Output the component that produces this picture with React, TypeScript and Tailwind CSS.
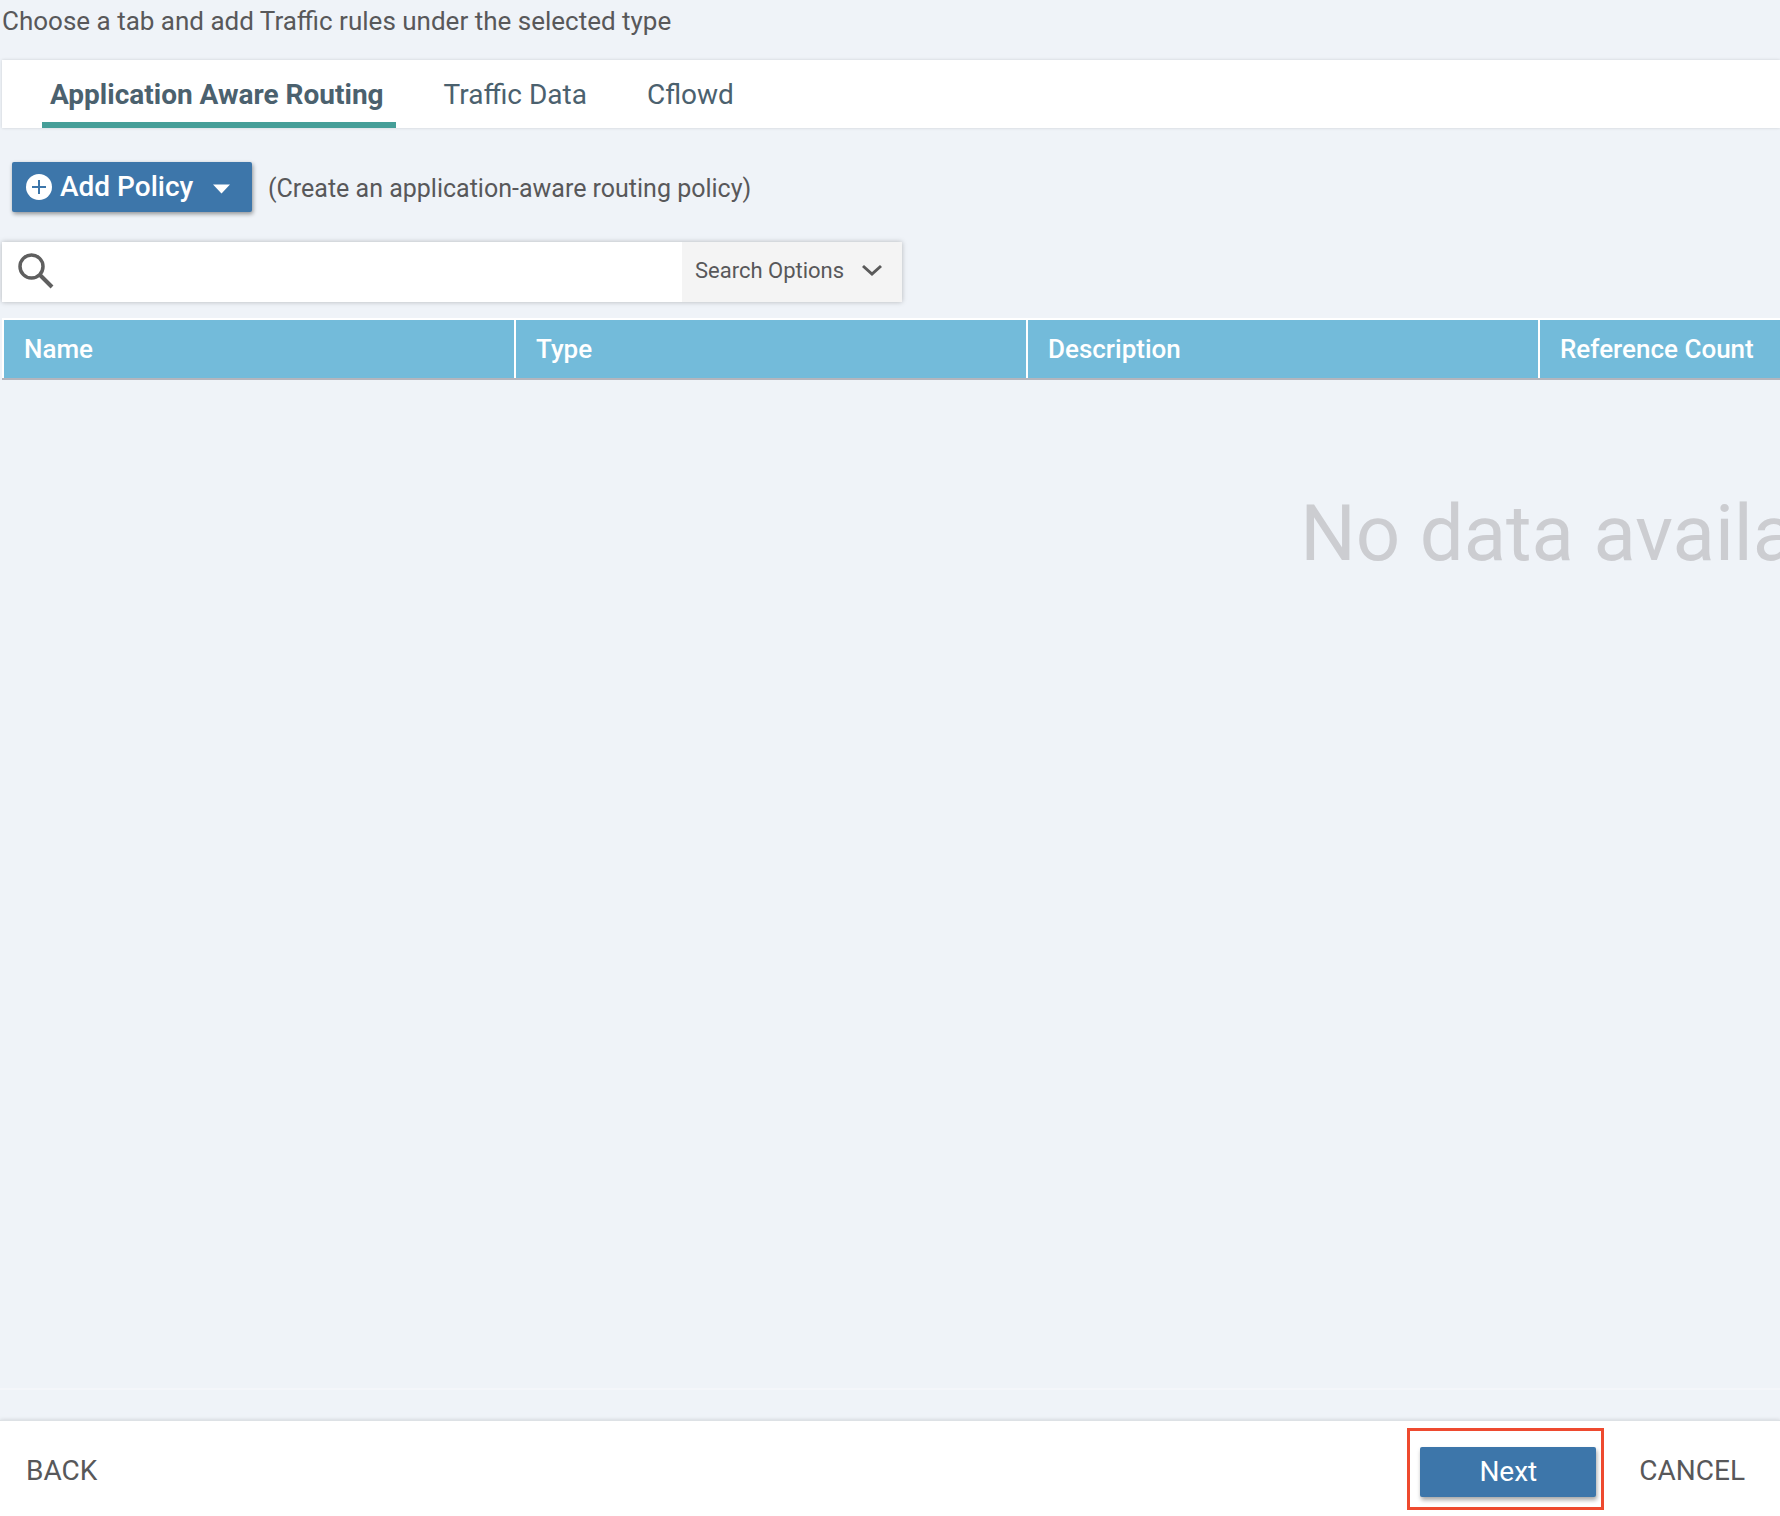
const TABS = ["Application Aware Routing", "Traffic Data", "Cflowd"];
const COLUMNS = ["Name", "Type", "Description", "Reference Count"];

function Tabs() {
  return (
    <div
      role="tablist"
      className="ml-[2px] mt-[18px] flex h-[68px] gap-10 bg-white pl-10 shadow-[0_0_3px_rgba(0,0,0,0.15)]"
    >
      {TABS.map((tab, i) => (
        <button
          key={tab}
          role="tab"
          aria-selected={i === 0}
          className={
            i === 0
              ? "border-b-[6px] border-[#459e98] pl-2 pr-3 pt-2 text-[28px] leading-8 font-bold text-[#4b616e]"
              : "border-b-[6px] border-transparent pl-2 pr-3 pt-2 text-[28px] leading-8 text-[#4b616e]"
          }
        >
          {tab}
        </button>
      ))}
    </div>
  );
}

function AddPolicy() {
  return (
    <div className="mt-[34px] flex items-center pl-3">
      <button className="flex h-[50px] w-60 items-center rounded-[2px] bg-[#3d76aa] pl-[14px] text-[28px] font-medium text-white shadow-[1px_2px_4px_rgba(0,0,0,0.4)]">
        <svg viewBox="0 0 26 26" className="mr-2 size-[26px]" aria-hidden="true">
          <circle cx="13" cy="13" r="13" fill="#fff" />
          <path d="M13 6v14M6 13h14" stroke="#3d76aa" strokeWidth="2" />
        </svg>
        <span>Add Policy</span>
        <svg viewBox="0 0 18 10" className="ml-5 mt-1 h-[10px] w-[18px]" aria-hidden="true">
          <path d="M0 0.5h17L8.500 9.500z" fill="#fff" />
        </svg>
      </button>
      <span className="ml-4 pt-1 text-[25px] leading-8">(Create an application-aware routing policy)</span>
    </div>
  );
}

function SearchBar() {
  return (
    <div className="ml-[2px] mt-[30px] flex h-[60px] w-[900px] max-w-full bg-white shadow-[0_0_5px_rgba(0,0,0,0.25)]">
      <label htmlFor="policy-search" className="flex items-center pl-4" aria-label="Search">
        <svg viewBox="0 0 36 36" className="mb-[2px] size-9" fill="none" stroke="#5f5f5f" aria-hidden="true">
          <circle cx="13.500" cy="13.500" r="11.500" strokeWidth="3.500" />
          <path d="M22 22L34 34" strokeWidth="4" />
        </svg>
      </label>
      <input id="policy-search" type="text" className="min-w-0 flex-1 bg-transparent px-3 text-2xl outline-none" />
      <button className="flex w-[220px] items-center bg-[#f4f4f4] pb-1 pl-[13px] text-[22px]">
        <span>Search Options</span>
        <svg
          viewBox="0 0 20 12"
          className="ml-[18px] h-3 w-5"
          fill="none"
          stroke="#5a5a5a"
          strokeWidth="3"
          aria-hidden="true"
        >
          <path d="M1 2l9 8 9-8" />
        </svg>
      </button>
    </div>
  );
}

function PolicyTable() {
  return (
    <table className="ml-[2px] mt-4 w-[calc(100%-2px)] table-fixed border-collapse">
      <thead>
        <tr className="h-[60px]">
          {COLUMNS.map((column, i) => (
            <th
              key={column}
              scope="col"
              className={
                i === 3
                  ? "bg-[#73bbda] border-t-2 border-l-2 border-b-2 border-t-white border-l-white border-b-[#b3b5bd] px-5 text-left text-[26px] leading-8 font-medium text-white"
                  : "w-[512px] bg-[#73bbda] border-t-2 border-l-2 border-b-2 border-t-white border-l-white border-b-[#b3b5bd] px-5 text-left text-[26px] leading-8 font-medium text-white"
              }
            >
              {column}
            </th>
          ))}
        </tr>
      </thead>
      <tbody>
        <tr>
          <td colSpan={4} className="pl-[73%] pt-[108px] text-[78px] leading-[92px] whitespace-nowrap text-[#cccdd1]">
            No data available
          </td>
        </tr>
      </tbody>
    </table>
  );
}

function Footer() {
  return (
    <footer className="flex h-24 items-center justify-between border-t border-[#dde1e5] bg-white pl-[26px] pr-[35px] text-[28px] shadow-[0_0_4px_rgba(0,0,0,0.15)]">
      <button className="pt-1">BACK</button>
      <div className="flex items-center">
        <div className="mr-[35px] border-[3px] border-[#ee4a2f] pt-4 pr-[5px] pb-[10px] pl-[10px]">
          <button className="h-[50px] w-44 rounded-[2px] bg-[#3d76aa] text-white shadow-[1px_3px_4px_rgba(0,0,0,0.35)]">
            Next
          </button>
        </div>
        <button className="pt-1">CANCEL</button>
      </div>
    </footer>
  );
}

export default function App() {
  return (
    <div className="flex min-h-screen flex-col overflow-hidden bg-[#eff3f8] font-['Roboto',sans-serif] text-[#58585a]">
      <p className="pl-[2px] pt-[5px] pb-[5px] text-[26px] leading-8">
        Choose a tab and add Traffic rules under the selected type
      </p>
      <Tabs />
      <AddPolicy />
      <SearchBar />
      <main className="mb-[30px] flex-1 overflow-hidden border-b-2 border-[#f4f6fa]">
        <PolicyTable />
      </main>
      <Footer />
    </div>
  );
}
